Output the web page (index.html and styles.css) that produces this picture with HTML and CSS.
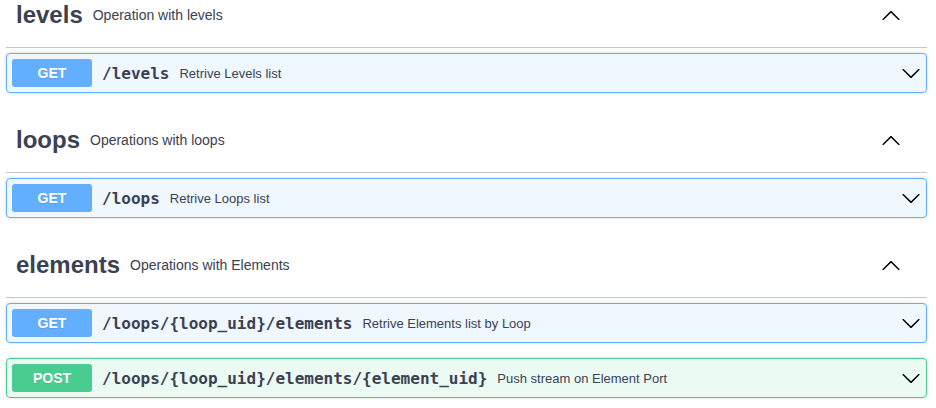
FILE: index.html
```html
<!DOCTYPE html>
<html>
<head>
<meta charset="utf-8">
<link rel="stylesheet" href="styles.css">
</head>
<body>
<div class="wrapper">
  <section class="tag-section">
    <div class="tag">
      <span class="tag-name">levels</span>
      <small class="tag-desc">Operation with levels</small>
      <svg class="tag-arrow" width="20" height="20" viewBox="0 0 20 20"><path d="M17.418 14.908c.272.268.709.268.979 0s.271-.701 0-.969l-7.908-7.83c-.27-.268-.707-.268-.979 0l-7.908 7.83c-.27.268-.27.701 0 .969.271.268.709.268.979 0L10 7.767l7.418 7.141z"/></svg>
    </div>
    <div class="opblock get">
      <span class="method">GET</span>
      <span class="path">/levels</span>
      <span class="desc">Retrive Levels list</span>
      <svg class="op-arrow" width="20" height="20" viewBox="0 0 20 20"><path d="M17.418 6.109c.272-.268.709-.268.979 0s.271.701 0 .969l-7.908 7.83c-.27.268-.707.268-.979 0l-7.908-7.83c-.27-.268-.27-.701 0-.969.271-.268.709-.268.979 0L10 13.25l7.418-7.141z"/></svg>
    </div>
  </section>
  <section class="tag-section">
    <div class="tag">
      <span class="tag-name">loops</span>
      <small class="tag-desc">Operations with loops</small>
      <svg class="tag-arrow" width="20" height="20" viewBox="0 0 20 20"><path d="M17.418 14.908c.272.268.709.268.979 0s.271-.701 0-.969l-7.908-7.83c-.27-.268-.707-.268-.979 0l-7.908 7.83c-.27.268-.27.701 0 .969.271.268.709.268.979 0L10 7.767l7.418 7.141z"/></svg>
    </div>
    <div class="opblock get">
      <span class="method">GET</span>
      <span class="path">/loops</span>
      <span class="desc">Retrive Loops list</span>
      <svg class="op-arrow" width="20" height="20" viewBox="0 0 20 20"><path d="M17.418 6.109c.272-.268.709-.268.979 0s.271.701 0 .969l-7.908 7.83c-.27.268-.707.268-.979 0l-7.908-7.83c-.27-.268-.27-.701 0-.969.271-.268.709-.268.979 0L10 13.25l7.418-7.141z"/></svg>
    </div>
  </section>
  <section class="tag-section">
    <div class="tag">
      <span class="tag-name">elements</span>
      <small class="tag-desc">Operations with Elements</small>
      <svg class="tag-arrow" width="20" height="20" viewBox="0 0 20 20"><path d="M17.418 14.908c.272.268.709.268.979 0s.271-.701 0-.969l-7.908-7.83c-.27-.268-.707-.268-.979 0l-7.908 7.83c-.27.268-.27.701 0 .969.271.268.709.268.979 0L10 7.767l7.418 7.141z"/></svg>
    </div>
    <div class="opblock get">
      <span class="method">GET</span>
      <span class="path">/loops/{loop_uid}/elements</span>
      <span class="desc">Retrive Elements list by Loop</span>
      <svg class="op-arrow" width="20" height="20" viewBox="0 0 20 20"><path d="M17.418 6.109c.272-.268.709-.268.979 0s.271.701 0 .969l-7.908 7.83c-.27.268-.707.268-.979 0l-7.908-7.83c-.27-.268-.27-.701 0-.969.271-.268.709-.268.979 0L10 13.25l7.418-7.141z"/></svg>
    </div>
    <div class="opblock post">
      <span class="method">POST</span>
      <span class="path">/loops/{loop_uid}/elements/{element_uid}</span>
      <span class="desc">Push stream on Element Port</span>
      <svg class="op-arrow" width="20" height="20" viewBox="0 0 20 20"><path d="M17.418 6.109c.272-.268.709-.268.979 0s.271.701 0 .969l-7.908 7.83c-.27.268-.707.268-.979 0l-7.908-7.83c-.27-.268-.27-.701 0-.969.271-.268.709-.268.979 0L10 13.25l7.418-7.141z"/></svg>
    </div>
  </section>
</div>
</body>
</html>
```

FILE: styles.css
```css
html, body {
  margin: 0;
  padding: 0;
  background: #fff;
  overflow: hidden;
}
body {
  font-family: "Liberation Sans", Arial, sans-serif;
  color: #3b4151;
}
.wrapper {
  margin-top: -17px;
  padding: 0 9px 0 6px;
}
.tag-section {
  display: flex;
  flex-direction: column;
}
.tag {
  display: flex;
  align-items: center;
  box-sizing: border-box;
  height: 65px;
  padding: 10px 26px 10px 10px;
  margin: 0 0 5px;
  border-bottom: 1px solid rgba(59, 65, 81, 0.3);
}
.tag-name {
  font-size: 24px;
  font-weight: bold;
}
.tag-desc {
  flex: 1;
  font-size: 14px;
  padding: 0 10px;
}
.tag-arrow {
  flex: none;
  fill: #000;
}
.opblock {
  display: flex;
  align-items: center;
  box-sizing: border-box;
  height: 40px;
  padding: 5px;
  margin: 0 0 15px;
  border: 1px solid;
  border-radius: 4px;
  box-shadow: 0 0 3px rgba(0, 0, 0, 0.19);
}
.opblock.get {
  background: rgba(97, 175, 254, 0.1);
  border-color: #61affe;
}
.opblock.post {
  background: rgba(73, 204, 144, 0.1);
  border-color: #49cc90;
}
.method {
  flex: none;
  box-sizing: border-box;
  width: 80px;
  height: 28px;
  line-height: 28px;
  text-align: center;
  font-size: 14px;
  font-weight: bold;
  color: #fff;
  border-radius: 3px;
  text-shadow: 0 1px 0 rgba(0, 0, 0, 0.1);
}
.get .method {
  background: #61affe;
}
.post .method {
  background: #49cc90;
}
.path {
  padding: 0 10px;
  font-family: "DejaVu Sans Mono", monospace;
  font-size: 16px;
  font-weight: 600;
  color: #3b4151;
}
.desc {
  flex: 1;
  font-size: 13px;
  color: #3b4151;
}
.op-arrow {
  flex: none;
  fill: #000;
}
```
